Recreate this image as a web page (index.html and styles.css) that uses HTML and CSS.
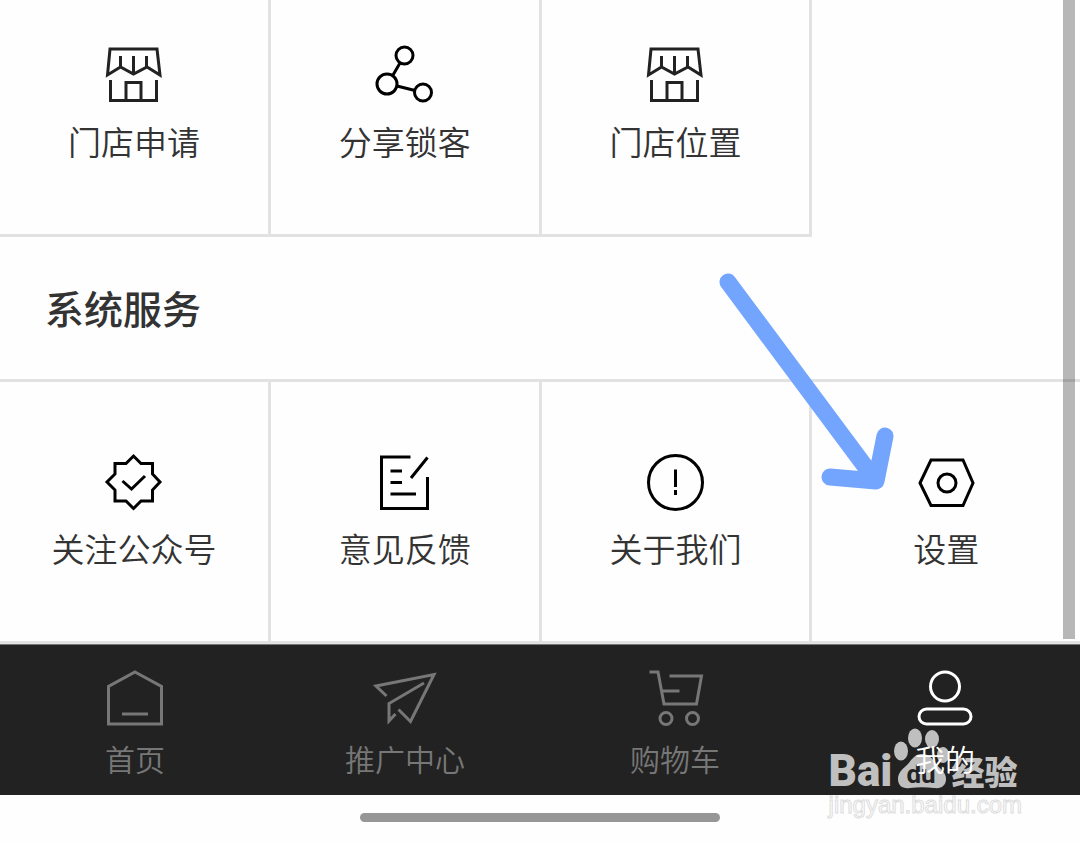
FILE: index.html
```html
<!DOCTYPE html>
<html lang="zh-CN">
<head>
    <meta charset="UTF-8">
    <meta name="viewport" content="width=device-width, initial-scale=1.0">
    <title>我的</title>
    <link rel="stylesheet" href="styles.css">
</head>
<body>
    <main class="page">
        <div class="grid grid-store">
            <a class="cell" href="#">
                <svg class="icon dark" viewBox="0 0 60 60">
                    <path d="M6 4H53L56 30L43 22L29.5 29L16.5 22L3.5 30Z M16.5 11V22 M29.5 11V29 M42.5 11V22 M6.5 35V55.5H52.5V35 M22 55V37.5H37V55"/>
                </svg>
                <span>门店申请</span>
            </a>
            <a class="cell" href="#">
                <svg class="icon" viewBox="0 0 60 60">
                    <circle cx="29.5" cy="10.5" r="8.5"/>
                    <circle cx="12" cy="39" r="10"/>
                    <circle cx="48" cy="47.5" r="8.5"/>
                    <path d="M25 18L18 30 M22 41L40 45.5"/>
                </svg>
                <span>分享锁客</span>
            </a>
            <a class="cell" href="#">
                <svg class="icon dark" viewBox="0 0 60 60">
                    <path d="M6 4H53L56 30L43 22L29.5 29L16.5 22L3.5 30Z M16.5 11V22 M29.5 11V29 M42.5 11V22 M6.5 35V55.5H52.5V35 M22 55V37.5H37V55"/>
                </svg>
                <span>门店位置</span>
            </a>
        </div>

        <h2 class="section-title">系统服务</h2>

        <div class="grid grid-system">
            <a class="cell" href="#">
                <svg class="icon" viewBox="0 0 60 60">
                    <path d="M29.5 4L37 11.5H48.5V22L56 30L48.5 38V49H37L29.5 56.5L22 49H11V38L3 30L11 22V11.5H22Z M18.5 29L27.5 37L41 24"/>
                </svg>
                <span>关注公众号</span>
            </a>
            <a class="cell" href="#">
                <svg class="icon" viewBox="0 0 60 60">
                    <path d="M35.5 5H6.5V56.5H52.5V25 M36 26L52.5 5.5 M15.5 19H27 M15.5 30.5H27 M15.5 42H41"/>
                </svg>
                <span>意见反馈</span>
            </a>
            <a class="cell" href="#">
                <svg class="icon" viewBox="0 0 60 60">
                    <circle cx="30.5" cy="30.5" r="27"/>
                    <path d="M30.5 17.5V35 M30.5 38V43"/>
                </svg>
                <span>关于我们</span>
            </a>
            <a class="cell" href="#">
                <svg class="icon" viewBox="0 0 60 60">
                    <path d="M4 31L15 8H47L57 31L47 53.5H15Z"/>
                    <circle cx="31" cy="31" r="9"/>
                </svg>
                <span>设置</span>
            </a>
        </div>

        <div class="scrollbar"></div>
        <svg class="arrow" viewBox="0 0 190 230">
            <path d="M18 22L166 221 M175 176L166 221L120 217"/>
        </svg>
    </main>

    <nav class="tabbar">
        <a class="tab" href="#">
            <svg class="tab-icon" viewBox="0 0 64 60">
                <path d="M32 4L58.5 18.5V56H5.5V18.5Z M19 46H45"/>
            </svg>
            <span>首页</span>
        </a>
        <a class="tab" href="#">
            <svg class="tab-icon" viewBox="0 0 64 60">
                <path d="M13.5 28L3 18L61 6.5L37.5 53.5L25.5 41.5 M51 15L16 35.5V53L22.5 46"/>
            </svg>
            <span>推广中心</span>
        </a>
        <a class="tab" href="#">
            <svg class="tab-icon" viewBox="0 0 64 60">
                <path d="M6.5 4H15L21 36H53.5L58.5 8H26.5 M19 23H36.5"/>
                <circle cx="23" cy="50.5" r="6"/>
                <circle cx="49.5" cy="50.5" r="6"/>
            </svg>
            <span>购物车</span>
        </a>
        <a class="tab active" href="#">
            <svg class="tab-icon" viewBox="0 0 64 60">
                <circle cx="32" cy="18.5" r="14.5"/>
                <rect x="6" y="41" width="52" height="15" rx="7.5"/>
            </svg>
            <span>我的</span>
        </a>
        <div class="watermark">
            <div class="brand">
                <span class="bai">Bai</span>
                <span class="paw">
                    <svg viewBox="0 0 56 64">
                        <ellipse cx="9" cy="24" rx="7" ry="9.5"/>
                        <ellipse cx="23" cy="11" rx="7" ry="9.5"/>
                        <ellipse cx="40" cy="12" rx="7" ry="9"/>
                        <ellipse cx="51" cy="28" rx="6" ry="8"/>
                        <path d="M30 27C23 27 20 32 16 37C11 42 6 45 6 52C6 59 11 62 18 61C26 60 34 60 42 61C50 62 54 58 54 52C54 45 48 42 44 37C40 31 37 27 30 27Z"/>
                    </svg>
                    <b>du</b>
                </span>
                <span class="jingyan">经验</span>
            </div>
            <div class="site">jingyan.baidu.com</div>
        </div>
    </nav>

    <footer class="gesture">
        <div class="pill"></div>
    </footer>
</body>
</html>
```
FILE: styles.css
```css
* {
    box-sizing: border-box;
}
body {
    margin: 0;
    min-height: 100vh;
    display: flex;
    flex-direction: column;
    background: #fefefe;
    color: #333;
    font-family: "Noto Sans CJK SC", sans-serif;
    overflow-x: hidden;
}
a {
    color: inherit;
    text-decoration: none;
}
.page {
    position: relative;
    overflow: hidden;
}
/* 3px wider so the last column's border falls off the edge */
.grid {
    display: grid;
    grid-template-columns: repeat(4, 1fr);
    width: calc(100% + 3px);
}
.cell {
    display: flex;
    flex-direction: column;
    align-items: center;
    border-right: 3px solid #e2e2e2;
    border-bottom: 3px solid #e2e2e2;
    font-size: 33px;
    line-height: 48px;
    font-weight: 350;
}
.cell span {
    margin-top: 12px;
}
.grid-store .cell {
    padding: 45px 0 69px;
}
.grid-system .cell {
    padding: 70px 0 69px;
}
.icon {
    width: 60px;
    height: 60px;
    fill: none;
    stroke: #000;
    stroke-width: 3;
}
.icon.dark {
    stroke: #222;
}
.section-title {
    margin: 0;
    padding: 43px 45px 44px;
    border-bottom: 3px solid #e2e2e2;
    font-size: 39px;
    line-height: 55px;
    font-weight: 500;
}
.scrollbar {
    position: absolute;
    top: 0;
    right: 5px;
    bottom: 5px;
    width: 12px;
    background: rgba(0, 0, 0, 0.28);
}
.arrow {
    position: absolute;
    top: 260px;
    right: 180px;
    width: 190px;
    height: 230px;
    fill: none;
    stroke: #73a5fe;
    stroke-width: 17;
    stroke-linecap: round;
    stroke-linejoin: round;
}
.tabbar {
    position: relative;
    display: flex;
    padding: 23px 0 15px;
    border-top: 1px solid #777;
    background: #222;
}
.tab {
    flex: 1;
    display: flex;
    flex-direction: column;
    align-items: center;
    color: #777;
    font-size: 30px;
    line-height: 44px;
    font-weight: 350;
}
.tab span {
    position: relative;
    z-index: 2;
    margin-top: 8px;
}
.tab.active {
    color: #fff;
}
.tab-icon {
    width: 64px;
    height: 60px;
    fill: none;
    stroke: currentColor;
    stroke-width: 3;
}
.watermark {
    position: absolute;
    top: 82px;
    right: 58px;
    z-index: 1;
    color: #bfbfbf;
}
.brand {
    display: flex;
    align-items: flex-end;
    height: 64px;
}
.bai {
    font-family: Roboto, sans-serif;
    font-size: 44px;
    line-height: 40px;
    font-weight: 900;
}
.paw {
    position: relative;
    width: 56px;
    height: 64px;
}
.paw svg {
    width: 56px;
    height: 64px;
    fill: #bfbfbf;
}
.paw b {
    position: absolute;
    left: 14px;
    bottom: 4px;
    color: #222;
    font-family: Roboto, sans-serif;
    font-size: 26px;
    line-height: 26px;
}
.jingyan {
    margin-left: 3px;
    font-size: 33px;
    line-height: 40px;
    font-weight: 900;
}
.site {
    color: #fff;
    font-family: "Liberation Sans", sans-serif;
    font-size: 24px;
    line-height: 28px;
    -webkit-text-stroke: 1px #ddd;
}
.gesture {
    flex: 1;
    padding: 18px 0 15px;
}
.pill {
    width: 33.33%;
    height: 9px;
    margin: 0 auto;
    border-radius: 5px;
    background: #969696;
}
```
